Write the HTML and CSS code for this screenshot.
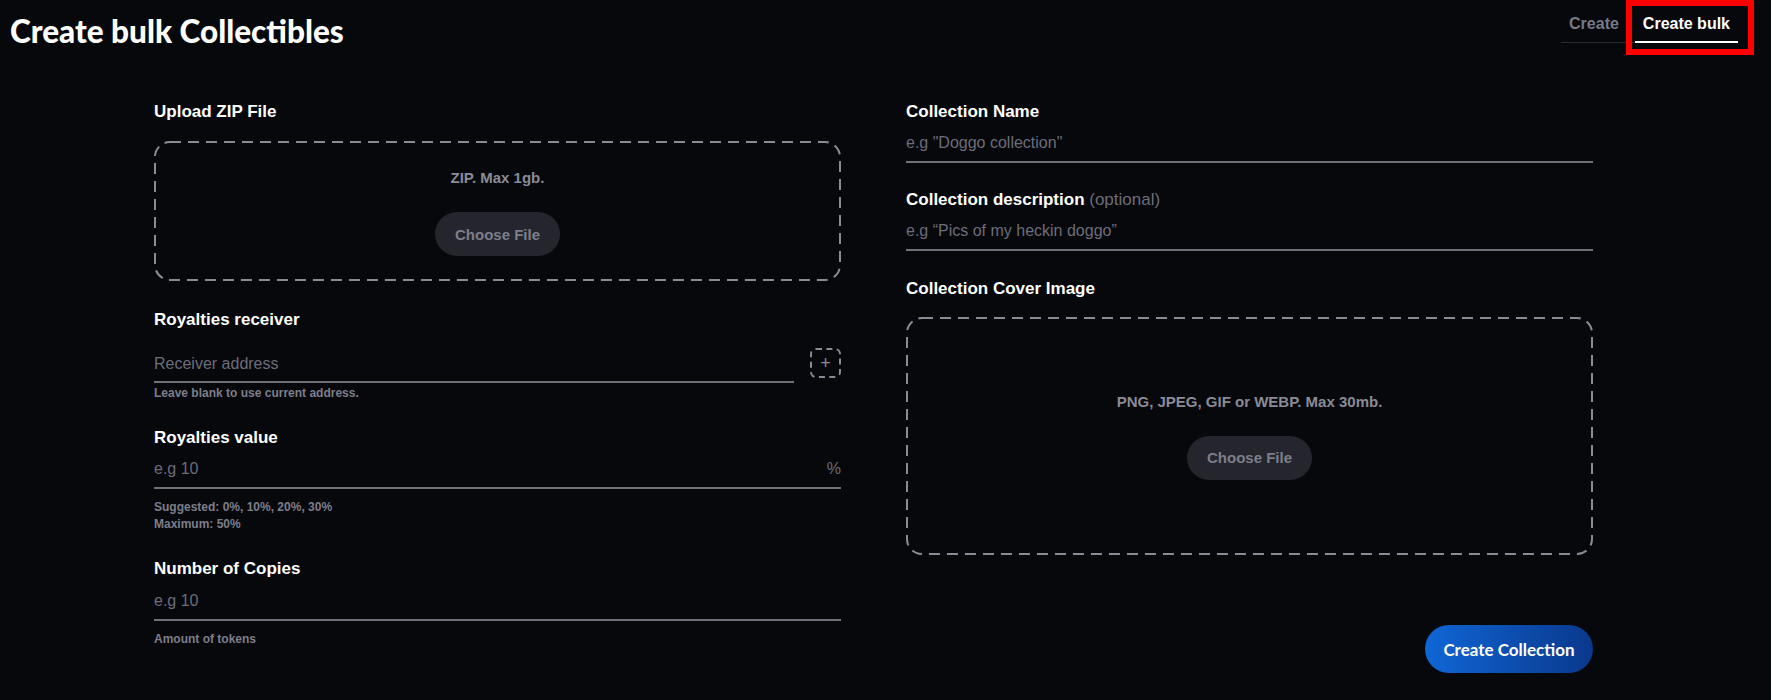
FILE: index.html
```html
<!DOCTYPE html>
<html lang="en">
<head>
  <meta charset="UTF-8" />
  <meta name="viewport" content="width=device-width, initial-scale=1" />
  <title>Create bulk Collectibles</title>
  <link rel="stylesheet" href="styles.css">
</head>
<body>
  <header class="topo">
    <h1>Create bulk Collectibles</h1>
    <nav class="abas">
      <a class="aba">Create</a>
      <a class="aba ativa">Create bulk<span class="destaque"></span></a>
    </nav>
  </header>

  <form class="formulario">
    <div class="coluna">
      <div class="rotulo">Upload ZIP File</div>
      <div class="arquivo arquivo-zip">
        <div class="arquivo-info">ZIP. Max 1gb.</div>
        <button type="button" class="escolher">Choose File</button>
      </div>

      <div class="rotulo rotulo-espaco">Royalties receiver</div>
      <div class="linha-receptor">
        <div class="campo">
          <input type="text" placeholder="Receiver address" />
        </div>
        <button type="button" class="adicionar">+</button>
      </div>
      <div class="ajuda ajuda-colada">Leave blank to use current address.</div>

      <div class="rotulo rotulo-apos-ajuda">Royalties value</div>
      <div class="campo">
        <input type="text" placeholder="e.g 10" />
        <span class="sufixo">%</span>
      </div>
      <div class="ajuda ajuda-longe">Suggested: 0%, 10%, 20%, 30%<br>Maximum: 50%</div>

      <div class="rotulo rotulo-apos-ajuda">Number of Copies</div>
      <div class="campo campo-gap1">
        <input type="text" placeholder="e.g 10" />
      </div>
      <div class="ajuda ajuda-tokens">Amount of tokens</div>
    </div>

    <div class="coluna">
      <div class="rotulo">Collection Name</div>
      <div class="campo">
        <input type="text" placeholder='e.g "Doggo collection"' />
      </div>

      <div class="rotulo rotulo-direita">Collection description <span class="opcional">(optional)</span></div>
      <div class="campo">
        <input type="text" placeholder="e.g “Pics of my heckin doggo”" />
      </div>

      <div class="rotulo rotulo-capa">Collection Cover Image</div>
      <div class="arquivo arquivo-capa">
        <div class="arquivo-info">PNG, JPEG, GIF or WEBP. Max 30mb.</div>
        <button type="button" class="escolher">Choose File</button>
      </div>

      <div class="acoes">
        <button type="button" class="criar">Create Collection</button>
      </div>
    </div>
  </form>
</body>
</html>
```

FILE: styles.css
```css
:root {
  --fundo: #07080c;
  --texto: #ffffff;
  --cinza: #6c6d79;
  --cinza-claro: #7d7e8a;
  --tracejado: #8a8b96;
  --linha: #6f707a;
  --botao-escuro: #25262d;
  --azul1: #0f66d6;
  --azul2: #0a388c;
}

body {
  margin: 0;
  background: var(--fundo);
  color: var(--texto);
  font-family: 'Liberation Sans', Arial, sans-serif;
  min-height: 100vh;
}

.topo {
  display: flex;
  justify-content: space-between;
  align-items: flex-start;
  padding: 13px 33px 0 10px;
}

h1 {
  margin: 0;
  font-family: 'Lato', 'Liberation Sans', sans-serif;
  font-weight: 900;
  font-size: 31.5px;
  line-height: 36px;
}

.abas {
  display: flex;
  gap: 8px;
  margin-top: 1px;
  border-bottom: 1px solid #2a2b33;
}

.aba {
  position: relative;
  padding: 0 8px 7px;
  font-size: 16px;
  line-height: 20px;
  font-weight: 700;
  color: #767986;
  cursor: pointer;
}

.aba.ativa {
  color: var(--texto);
  margin-bottom: -1px;
  border-bottom: 2px solid var(--texto);
}

/* marcação vermelha por cima da aba */
.destaque {
  position: absolute;
  left: -9px;
  right: -16px;
  top: -14px;
  bottom: -14px;
  border: 6px solid #ff0000;
  pointer-events: none;
}

.formulario {
  display: grid;
  grid-template-columns: 687px 687px;
  column-gap: 65px;
  margin: 52px 0 0 154px;
}

.coluna {
  display: flex;
  flex-direction: column;
}

.rotulo {
  padding-top: 2px;
  font-size: 17px;
  line-height: 18px;
  font-weight: 700;
}

.rotulo-espaco { margin-top: 28px; }
.rotulo-apos-ajuda { margin-top: 25px; }
.rotulo-direita { margin-top: 26px; }
.rotulo-capa { margin-top: 27px; }

.opcional {
  color: var(--cinza);
  font-weight: 400;
}

.arquivo {
  display: flex;
  flex-direction: column;
  align-items: center;
  box-sizing: border-box;
  border-radius: 16px;
  background-image: url("data:image/svg+xml,%3csvg width='100%25' height='100%25' xmlns='http://www.w3.org/2000/svg'%3e%3crect width='100%25' height='100%25' fill='none' rx='16' ry='16' stroke='%238A8B96' stroke-width='4' stroke-dasharray='11%2c 7'/%3e%3c/svg%3e");
}

.arquivo-zip {
  margin-top: 20px;
  height: 140px;
  padding-top: 28px;
}

.arquivo-capa {
  margin-top: 19px;
  height: 238px;
  justify-content: center;
}

.arquivo-info {
  font-size: 15px;
  line-height: 18px;
  font-weight: 700;
  color: var(--tracejado);
}

.escolher {
  margin-top: 25px;
  width: 125px;
  height: 44px;
  border: none;
  border-radius: 22px;
  background: var(--botao-escuro);
  color: var(--cinza-claro);
  font-family: inherit;
  font-size: 15px;
  font-weight: 700;
  cursor: pointer;
}

.campo {
  display: flex;
  align-items: center;
  height: 42px;
  padding-top: 4px;
  box-sizing: border-box;
  border-bottom: 2px solid var(--linha);
}

.campo input {
  flex: 1;
  min-width: 0;
  background: transparent;
  border: none;
  outline: none;
  padding: 0;
  color: var(--texto);
  font-family: inherit;
  font-size: 16px;
}

.campo input::placeholder {
  color: var(--cinza);
}

.sufixo {
  font-size: 16px;
  color: var(--cinza);
}

.campo-gap1 { margin-top: 1px; }

.linha-receptor {
  display: flex;
  align-items: center;
  gap: 16px;
  margin-top: 14px;
}

.linha-receptor .campo {
  flex: 1;
  height: 40px;
  padding-top: 3px;
}

.adicionar {
  width: 31px;
  height: 30px;
  padding: 0;
  border: 2px dashed var(--tracejado);
  border-radius: 6px;
  background: transparent;
  color: var(--tracejado);
  font-size: 18px;
  line-height: 1;
  cursor: pointer;
}

.ajuda {
  font-size: 12px;
  line-height: 17px;
  font-weight: 700;
  color: var(--cinza-claro);
}

.ajuda-colada { margin-top: 2px; }
.ajuda-longe { margin-top: 10px; }
.ajuda-tokens { margin-top: 10px; }

.acoes {
  display: flex;
  justify-content: flex-end;
  margin-top: 70px;
}

.criar {
  width: 168px;
  height: 48px;
  border: none;
  border-radius: 24px;
  background: linear-gradient(to right, var(--azul1), var(--azul2));
  color: var(--texto);
  font-family: 'Lato', 'Liberation Sans', sans-serif;
  font-size: 17px;
  font-weight: 700;
  cursor: pointer;
}
```
